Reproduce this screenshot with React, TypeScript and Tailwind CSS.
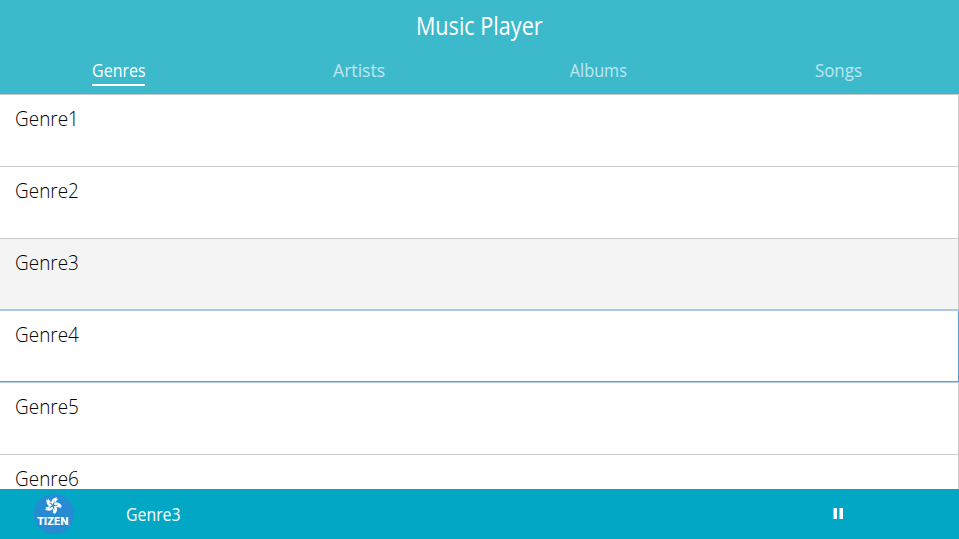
const tabs = [
  { label: 'Genres', active: true, cls: 'scale-x-[0.84]' },
  { label: 'Artists', active: false, cls: 'scale-x-[0.93]' },
  { label: 'Albums', active: false, cls: 'scale-x-[0.855]' },
  { label: 'Songs', active: false, cls: 'scale-x-[0.89]' },
];

const genres = ['Genre1', 'Genre2', 'Genre3', 'Genre4', 'Genre5', 'Genre6'];

function rowStyle(name: string) {
  if (name === 'Genre3') return 'h-[71px] border-t border-[#cacaca] bg-[#f4f4f4]';
  if (name === 'Genre4') return 'h-[73px] border-t-2 border-b border-t-[#a9c8ea] border-b-[#559ee2]';
  if (name === 'Genre5') return 'h-[72px] border-t border-[#b3cfec]';
  return 'h-[72px] border-t border-[#cacaca]';
}

function TizenLogo() {
  return (
    <svg width="40" height="40" viewBox="0 0 40 40" role="img" aria-label="Tizen">
      <circle cx="20" cy="20" r="20" fill="#268bd2" />
      <g transform="translate(19.1 11.4)" fill="#fff">
        {[12, 84, 156, 228, 300].map((a) => (
          <path
            key={a}
            transform={`rotate(${a})`}
            d="M-1 -0.8 C-3.6 -3.2 -2.6 -7 2.4 -8.8 L1.9 -7.2 L3.8 -7.3 C1.9 -6 2.4 -3.4 0.9 -1.3 C1.3 -3 0.7 -4.2 -0.1 -4.9 C0.4 -3.3 0 -1.8 -1 -0.8 Z"
          />
        ))}
      </g>
      <text x="3" y="31.3" fill="#fff" fontFamily="Inter, sans-serif" fontWeight="800" fontSize="9.8" textLength="31.4" lengthAdjust="spacingAndGlyphs">
        TIZEN
      </text>
      <circle cx="35" cy="31" r="0.5" fill="#a5cdec" />
    </svg>
  );
}

export default function App() {
  return (
    <div className="flex h-[539px] w-[959px] flex-col overflow-hidden bg-white font-['Open_Sans',sans-serif]">
      <header className="flex h-[94px] shrink-0 flex-col bg-[#3db9cc] text-white">
        <h1 className="flex h-[53px] items-center justify-center pr-px pb-[2px] text-[25px]">
          <span className="scale-x-[0.865]">Music Player</span>
        </h1>
        <nav className="-ml-px grid w-[959px] grid-cols-4">
          {tabs.map((t) => (
            <div key={t.label} className="flex justify-center">
              <div
                className={
                  t.active
                    ? 'flex h-[33px] w-[53px] justify-center border-b-2 border-white text-[19px] leading-[34px]'
                    : 'flex h-[33px] w-[53px] justify-center text-[19px] leading-[34px] text-white/65'
                }
              >
                <span className={t.cls}>{t.label}</span>
              </div>
            </div>
          ))}
        </nav>
      </header>
      <main className="h-[395px] shrink-0 overflow-hidden">
        {genres.map((g) => (
          <div key={g} className={`flex justify-between ${rowStyle(g)}`}>
            <span className="origin-left scale-x-[0.945] pt-[14px] pl-4 text-[20px] leading-[20px] font-light text-black">{g}</span>
            <span className={g === 'Genre4' ? 'w-px bg-[#559ee2]' : 'w-px bg-[#c8c8c8]'} />
          </div>
        ))}
      </main>
      <footer className="flex h-[50px] shrink-0 items-center bg-[#02a7c5] text-white">
        <div className="ml-[34px] w-[92px]">
          <TizenLogo />
        </div>
        <span className="origin-left scale-x-[0.88] pt-px text-[18px]">Genre3</span>
        <div className="mr-[116px] mb-px ml-auto flex gap-[2px]">
          <span className="h-[11px] w-[4px] border-l border-[#80d3e2] bg-white" />
          <span className="h-[11px] w-[4px] border-l border-[#80d3e2] bg-white" />
        </div>
      </footer>
    </div>
  );
}
